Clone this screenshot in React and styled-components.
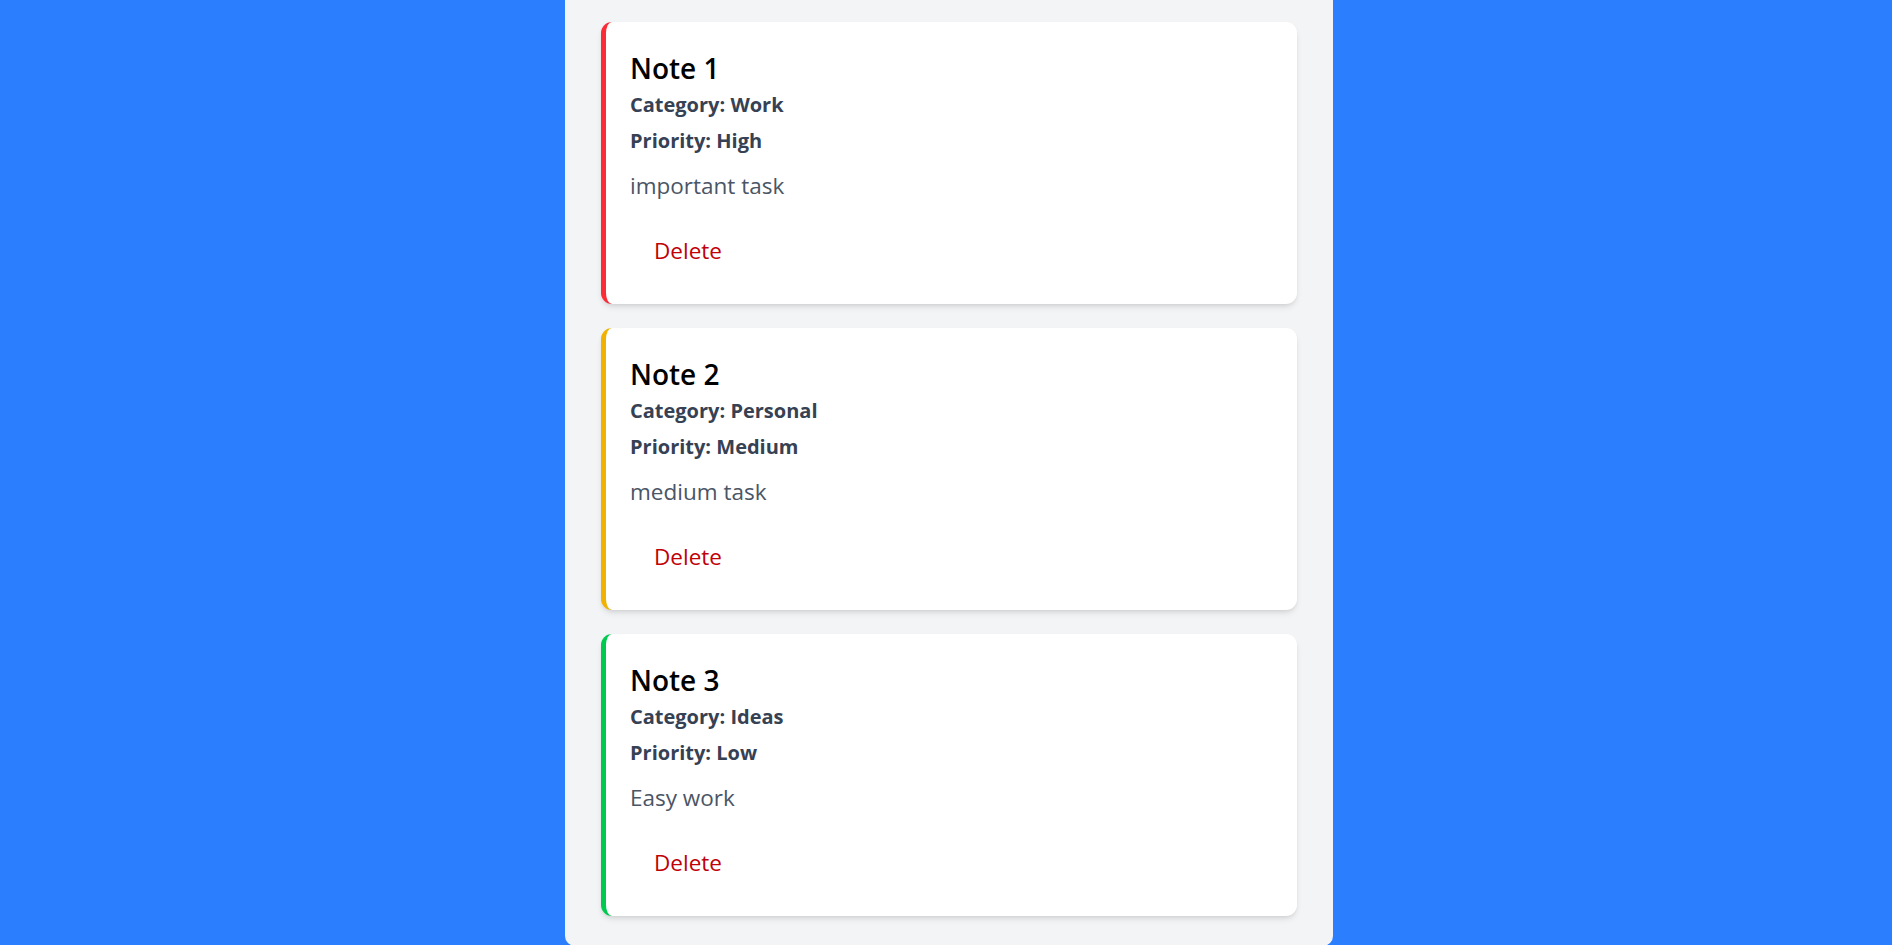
import React from "react";
import styled, { createGlobalStyle } from "styled-components";

const GlobalStyle = createGlobalStyle`
  html, body {
    margin: 0;
    padding: 0;
    background: #2b7fff;
    font-family: "Open Sans", "Noto Sans", Arial, sans-serif;
  }
  * { box-sizing: border-box; }
`;

const Page = styled.div`
  min-height: 945px;
  background: #2b7fff;
  display: flex;
  justify-content: center;
  padding-left: 6px;
`;

const Panel = styled.main`
  width: 768px;
  background: #f3f4f6;
  border-radius: 0 0 10px 10px;
  padding: 22px 36px 30px;
  display: flex;
  flex-direction: column;
  gap: 24px;
`;

const Card = styled.article`
  background: #ffffff;
  border-left: 5px solid ${(p) => p.$accent};
  border-radius: 11px;
  box-shadow: 0 4px 6px -1px rgba(0, 0, 0, 0.1), 0 2px 4px -2px rgba(0, 0, 0, 0.1);
  padding: 27px 24px 29px;
  display: flex;
  flex-direction: column;
  align-items: flex-start;
`;

const Title = styled.h2`
  margin: 0;
  font-size: 28px;
  line-height: 38px;
  font-weight: 600;
  color: #000000;
`;

const Meta = styled.p`
  margin: 0;
  font-size: 20px;
  line-height: 36px;
  font-weight: 700;
  color: #364153;
`;

const Body = styled.p`
  margin: 11px 0 0;
  font-size: 22.5px;
  line-height: 32px;
  color: #4a5565;
`;

const DeleteButton = styled.button`
  margin-top: 25px;
  border: none;
  background: transparent;
  padding: 8px 24px;
  font-family: inherit;
  font-size: 22.5px;
  line-height: 32px;
  color: #c10007;
  cursor: pointer;
  border-radius: 6px;
`;

const notes = [
  { id: 1, title: "Note 1", category: "Work", priority: "High", text: "important task", accent: "#fb2c36" },
  { id: 2, title: "Note 2", category: "Personal", priority: "Medium", text: "medium task", accent: "#f0b100" },
  { id: 3, title: "Note 3", category: "Ideas", priority: "Low", text: "Easy work", accent: "#00c950" },
];

export default function App() {
  return (
    <>
      <GlobalStyle />
      <Page>
        <Panel>
          {notes.map((n) => (
            <Card key={n.id} $accent={n.accent}>
              <Title>{n.title}</Title>
              <Meta>Category: {n.category}</Meta>
              <Meta>Priority: {n.priority}</Meta>
              <Body>{n.text}</Body>
              <DeleteButton>Delete</DeleteButton>
            </Card>
          ))}
        </Panel>
      </Page>
    </>
  );
}
